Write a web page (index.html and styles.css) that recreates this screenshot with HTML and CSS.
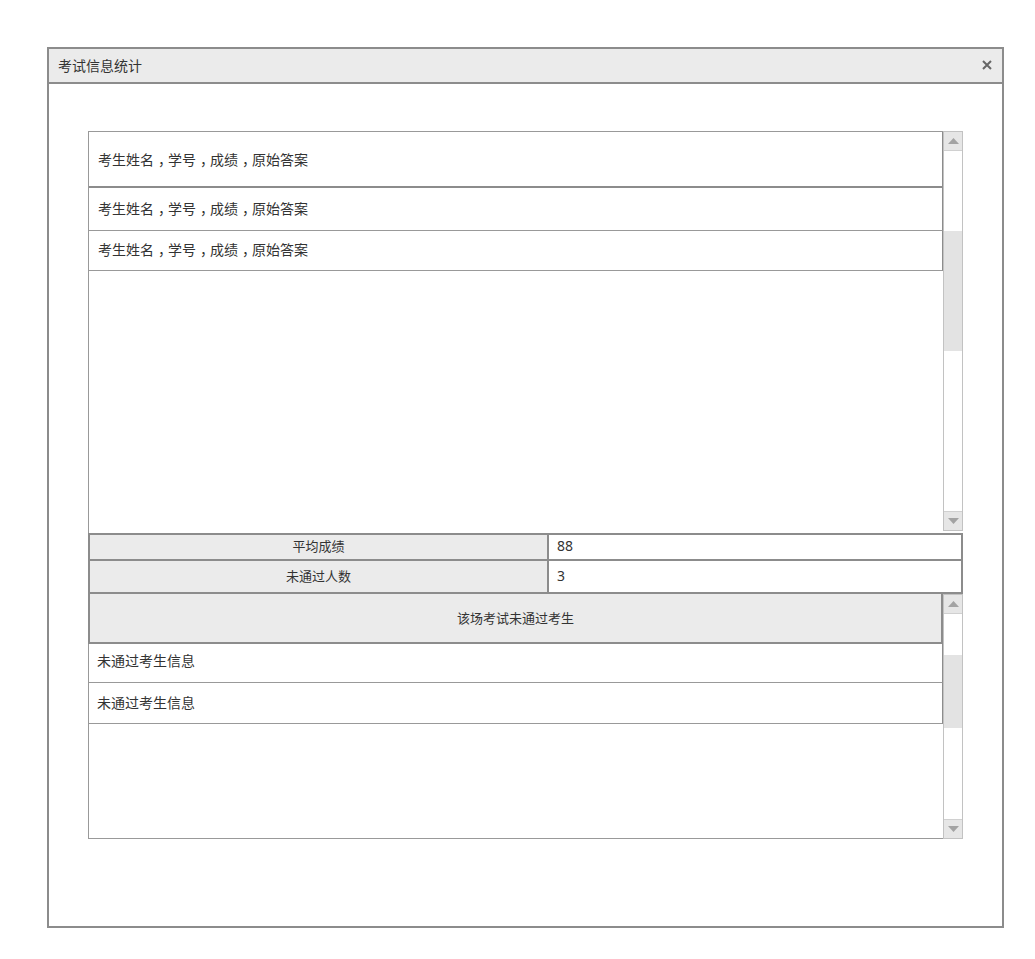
FILE: index.html
```html
<!DOCTYPE html>
<html lang="zh-CN">
<head>
<meta charset="utf-8">
<title>考试信息统计</title>
<link rel="stylesheet" href="styles.css">
</head>
<body>
<div class="window">
  <div class="titlebar">
    <span class="title">考试信息统计</span>
    <span class="close"><svg width="10" height="10" viewBox="0 0 10 10"><path d="M1 1L9 9M9 1L1 9" stroke="#666" stroke-width="2" fill="none"/></svg></span>
  </div>
  <div class="content">
    <div class="panel upper">
      <div class="list top">
        <div class="row r1">考生姓名<span class="comma">，</span>学号<span class="comma">，</span>成绩<span class="comma">，</span>原始答案</div>
        <div class="row r2">考生姓名<span class="comma">，</span>学号<span class="comma">，</span>成绩<span class="comma">，</span>原始答案</div>
        <div class="row r3">考生姓名<span class="comma">，</span>学号<span class="comma">，</span>成绩<span class="comma">，</span>原始答案</div>
      </div>
      <div class="scrollbar sb-upper">
        <div class="sbtn up"><svg width="11" height="6" viewBox="0 0 11 6"><path d="M0 6L5.5 0L11 6Z" fill="#a3a3a3"/></svg></div>
        <div class="track"><div class="thumb"></div></div>
        <div class="sbtn down"><svg width="11" height="6" viewBox="0 0 11 6"><path d="M0 0L5.5 6L11 0Z" fill="#a3a3a3"/></svg></div>
      </div>
    </div>
    <div class="stats">
      <div class="label">平均成绩</div>
      <div class="value">88</div>
      <div class="label">未通过人数</div>
      <div class="value">3</div>
    </div>
    <div class="panel lower">
      <div class="list bottom">
        <div class="header">该场考试未通过考生</div>
        <div class="row f1">未通过考生信息</div>
        <div class="row f2">未通过考生信息</div>
      </div>
      <div class="scrollbar sb-lower">
        <div class="sbtn up"><svg width="11" height="6" viewBox="0 0 11 6"><path d="M0 6L5.5 0L11 6Z" fill="#a3a3a3"/></svg></div>
        <div class="track"><div class="thumb"></div></div>
        <div class="sbtn down"><svg width="11" height="6" viewBox="0 0 11 6"><path d="M0 0L5.5 6L11 0Z" fill="#a3a3a3"/></svg></div>
      </div>
    </div>
  </div>
</div>
</body>
</html>
```
FILE: styles.css
```css
* { box-sizing: border-box; }
html, body { margin: 0; padding: 0; background: #fff; }
body {
  font-family: "Noto Sans CJK SC", "Noto Sans", sans-serif;
  color: #333;
  padding: 47px 0 0 47px;
}
.window {
  width: 957px;
  height: 881px;
  border: 2px solid #8c8c8c;
  display: flex;
  flex-direction: column;
}
.titlebar {
  height: 35px;
  flex: none;
  background: #ebebeb;
  border-bottom: 2px solid #8c8c8c;
  display: flex;
  align-items: center;
  justify-content: space-between;
  padding: 0 10px 2px 9px;
  font-size: 14px;
}
.title { line-height: 1; }
.close { display: flex; }
.content {
  padding: 47px 0 0 39px;
}
.panel {
  display: flex;
  width: 875px;
}
.upper { height: 402px; }
.list {
  width: 855px;
  border-left: 1px solid #999;
  display: flex;
  flex-direction: column;
}
.list.top { border-top: 1px solid #999; }
.row {
  border-right: 1px solid #8c8c8c;
  border-bottom: 1px solid #999;
  display: flex;
  align-items: center;
  padding-left: 9px;
  padding-bottom: 2px;
  font-size: 14px;
  line-height: 1;
}
.comma {
  padding-left: 4px;
  letter-spacing: -4px;
}
.r1 { height: 56px; border-bottom: 2px solid #8c8c8c; padding-bottom: 1px; }
.r2 { height: 43px; }
.r3 { height: 40px; padding-bottom: 3px; }
.scrollbar {
  width: 20px;
  border: 1px solid #c2c2c2;
  display: flex;
  flex-direction: column;
}
.sb-upper { height: 400px; }
.sb-lower { height: 245px; }
.sbtn {
  height: 19px;
  flex: none;
  background: #e6e6e6;
  display: flex;
  align-items: center;
  justify-content: center;
}
.sbtn.up { border-bottom: 1px solid #d0d0d0; }
.sbtn.down { border-top: 1px solid #d0d0d0; }
.track { flex: 1; }
.thumb { background: #e3e3e3; }
.sb-upper .thumb { margin-top: 80px; height: 120px; }
.sb-lower .thumb { margin-top: 41px; height: 73px; }
.stats {
  width: 875px;
  display: grid;
  grid-template-columns: 457px 412px;
  grid-template-rows: 24px 31px;
  gap: 2px;
  padding: 2px;
  background: #8c8c8c;
  font-size: 13px;
  line-height: 1;
}
.label {
  background: #ebebeb;
  display: flex;
  align-items: center;
  justify-content: center;
  padding-bottom: 3px;
}
.value {
  background: #fff;
  display: flex;
  align-items: center;
  padding-left: 8px;
  padding-bottom: 2px;
  font-family: "Noto Sans", sans-serif;
  font-size: 14px;
}
.lower { height: 245px; }
.list.bottom {
  border-bottom: 1px solid #999;
}
.header {
  height: 50px;
  flex: none;
  margin-left: -1px;
  background: #ebebeb;
  border-left: 2px solid #8c8c8c;
  border-right: 2px solid #8c8c8c;
  border-bottom: 2px solid #8c8c8c;
  display: flex;
  align-items: center;
  justify-content: center;
  padding-bottom: 2px;
  font-size: 13px;
  line-height: 1;
}
.f1 { height: 39px; padding-left: 8px; padding-bottom: 6px; }
.f2 { height: 41px; padding-left: 8px; padding-bottom: 3px; }
```
